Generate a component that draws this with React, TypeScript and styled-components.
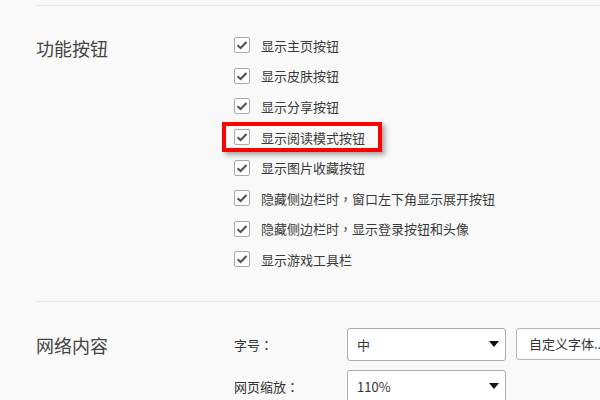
import React from "react";
import styled, { createGlobalStyle } from "styled-components";

const GlobalStyle = createGlobalStyle`
  html, body {
    margin: 0;
    padding: 0;
    background: #f9f9f9;
    overflow: hidden;
  }
  body {
    font-family: "Noto Sans CJK SC", "Noto Sans", sans-serif;
    color: #333;
  }
`;

const Page = styled.div`
  width: 600px;
  height: 400px;
  padding: 5px 0 0 36px;
  box-sizing: border-box;
  overflow: hidden;
`;

const Section = styled.section<{ $top: number; $bottom: number }>`
  display: grid;
  grid-template-columns: 198px 1fr;
  border-top: 1px solid #e6e6e6;
  padding-top: ${(p) => p.$top}px;
  padding-bottom: ${(p) => p.$bottom}px;
`;

const SectionTitle = styled.h2<{ $offset: number }>`
  margin: 0;
  padding-top: ${(p) => p.$offset}px;
  font-size: 18px;
  font-weight: normal;
  line-height: 24px;
  color: #444;
`;

const OptionList = styled.div`
  display: flex;
  flex-direction: column;
`;

const OptionRow = styled.label`
  position: relative;
  display: flex;
  align-items: center;
  height: 30.6px;
  font-size: 13px;
  color: #3a3a3a;
  white-space: nowrap;
`;

const Box = styled.span`
  display: flex;
  align-items: center;
  justify-content: center;
  width: 16px;
  height: 16px;
  box-sizing: border-box;
  margin-right: 11px;
  border: 1px solid #a8a8a8;
  border-radius: 2px;
  background: #fff;
`;

const Highlight = styled.span`
  position: absolute;
  left: -12px;
  top: 0;
  width: 160px;
  height: 30px;
  box-sizing: border-box;
  border: 4px solid #ff0000;
  box-shadow: 3px 3px 5px rgba(0, 0, 0, 0.35);
  pointer-events: none;
`;

const FormList = styled.div`
  display: flex;
  flex-direction: column;
  gap: 9px;
`;

const FormRow = styled.div`
  display: flex;
  align-items: center;
`;

const FieldLabel = styled.span`
  width: 113px;
  flex: none;
  font-size: 13px;
  color: #333;
`;

/* centred full-width punctuation, as the original UI font draws it */
const Punct = styled.span`
  font-family: "Noto Sans CJK TC", "Noto Sans CJK SC", sans-serif;
`;

const Select = styled.div`
  position: relative;
  display: flex;
  align-items: center;
  width: 159px;
  height: 33px;
  flex: none;
  box-sizing: border-box;
  padding-left: 9px;
  border: 1px solid #acacac;
  border-radius: 3px;
  background: #fff;
  font-size: 13px;
  color: #333;
`;

const Arrow = styled.svg`
  position: absolute;
  right: 6px;
  top: 50%;
  margin-top: -3px;
`;

const Button = styled.button`
  height: 32px;
  width: 110px;
  flex: none;
  margin: -1px 0 0 10px;
  padding: 0 0 0 12px;
  box-sizing: border-box;
  border: 1px solid #b5b5b5;
  border-radius: 3px;
  background: #fff;
  font-family: inherit;
  font-size: 13px;
  color: #333;
  text-align: left;
  white-space: nowrap;
`;

const Check = () => (
  <svg width="12" height="10" viewBox="0 0 12 10">
    <path
      d="M1.5 5.2 L4.6 8 L10.5 2"
      fill="none"
      stroke="#555"
      strokeWidth="2.2"
    />
  </svg>
);

const DropArrow = () => (
  <Arrow width="10" height="7" viewBox="0 0 10 7">
    <path d="M0 0 H10 L5 6 Z" fill="#111" />
  </Arrow>
);

const options = [
  "显示主页按钮",
  "显示皮肤按钮",
  "显示分享按钮",
  "显示阅读模式按钮",
  "显示图片收藏按钮",
  "隐藏侧边栏时，窗口左下角显示展开按钮",
  "隐藏侧边栏时，显示登录按钮和头像",
  "显示游戏工具栏",
];

const withPunct = (text: string) =>
  text.split(/(，)/).map((part, i) =>
    part === "，" ? <Punct key={i}>{part}</Punct> : part
  );

export default function App() {
  return (
    <Page>
      <GlobalStyle />
      <Section $top={24} $bottom={26}>
        <SectionTitle $offset={6}>功能按钮</SectionTitle>
        <OptionList>
          {options.map((text, i) => (
            <OptionRow key={text}>
              <Box>
                <Check />
              </Box>
              {withPunct(text)}
              {i === 3 && <Highlight />}
            </OptionRow>
          ))}
        </OptionList>
      </Section>
      <Section $top={26} $bottom={0}>
        <SectionTitle $offset={5}>网络内容</SectionTitle>
        <FormList>
          <FormRow>
            <FieldLabel>
              字号<Punct>：</Punct>
            </FieldLabel>
            <Select>
              中
              <DropArrow />
            </Select>
            <Button>自定义字体...</Button>
          </FormRow>
          <FormRow>
            <FieldLabel>
              网页缩放<Punct>：</Punct>
            </FieldLabel>
            <Select>
              110%
              <DropArrow />
            </Select>
          </FormRow>
        </FormList>
      </Section>
    </Page>
  );
}
